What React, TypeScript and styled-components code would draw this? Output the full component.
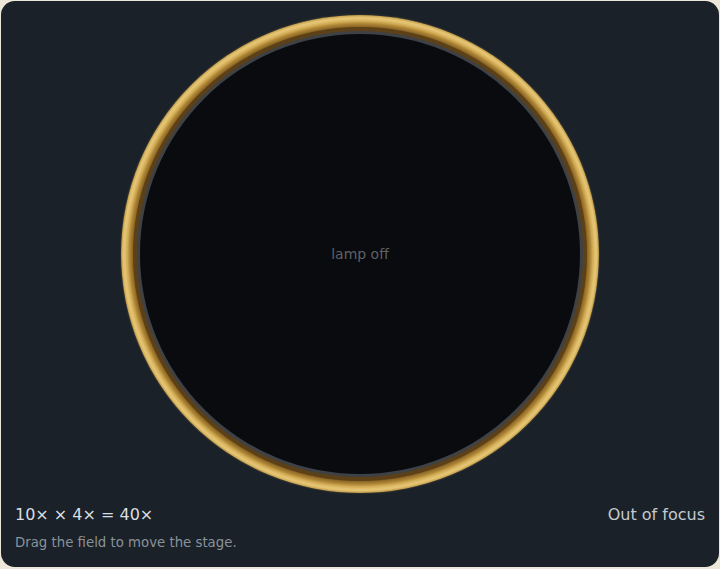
import styled, { createGlobalStyle } from "styled-components";

const Global = createGlobalStyle`
  html, body {
    margin: 0;
    padding: 0;
    background: #ede7da;
  }
  body {
    font-family: "DejaVu Sans", "Liberation Sans", sans-serif;
  }
`;

const Panel = styled.div`
  box-sizing: border-box;
  margin: 1px;
  width: 718px;
  height: 566px;
  padding: 14px 14px 17px 14px;
  border-radius: 14px;
  background: #1a2128;
  display: flex;
  flex-direction: column;
`;

const Stage = styled.div`
  display: flex;
  justify-content: center;
  cursor: grab;
`;

// gold eyepiece ring around the field of view
const Ring = styled.div`
  box-sizing: border-box;
  width: 478px;
  height: 478px;
  border-radius: 50%;
  padding: 12px;
  background: radial-gradient(
    circle closest-side at 50% 50%,
    #7e5b20 0px,
    #7e5b20 226.5px,
    #9a732c 228.5px,
    #b08838 230.5px,
    #cfa852 232.5px,
    #e2c170 235px,
    #e4c574 236.5px,
    #cba552 238.3px,
    #a98a48 239px
  );
  box-shadow: 0 0 2px rgba(230, 200, 120, 0.3);
`;

const Lens = styled.div`
  box-sizing: border-box;
  width: 100%;
  height: 100%;
  border-radius: 50%;
  border: 4px solid #5c4018;
  background: #3e4146;
  padding: 3px;
`;

const Field = styled.div`
  width: 100%;
  height: 100%;
  border-radius: 50%;
  background: #090b0e;
  display: flex;
  align-items: center;
  justify-content: center;
  font-size: 14px;
  color: #5c6168;
`;

const Footer = styled.div`
  margin-top: 12px;
  display: flex;
  flex-direction: column;
  gap: 11px;
`;

const Row = styled.div`
  display: flex;
  justify-content: space-between;
  align-items: center;
  font-size: 16px;
  line-height: 19px;
  color: #d9dee3;
`;

const Status = styled.span`
  color: #c4cad0;
`;

const Hint = styled.div`
  font-size: 13.3px;
  line-height: 15px;
  color: #8a929a;
`;

export default function App() {
  return (
    <>
      <Global />
      <Panel>
        <Stage>
          <Ring>
            <Lens>
              <Field>lamp off</Field>
            </Lens>
          </Ring>
        </Stage>
        <Footer>
          <Row>
            <span>10× × 4× = 40×</span>
            <Status>Out of focus</Status>
          </Row>
          <Hint>Drag the field to move the stage.</Hint>
        </Footer>
      </Panel>
    </>
  );
}
